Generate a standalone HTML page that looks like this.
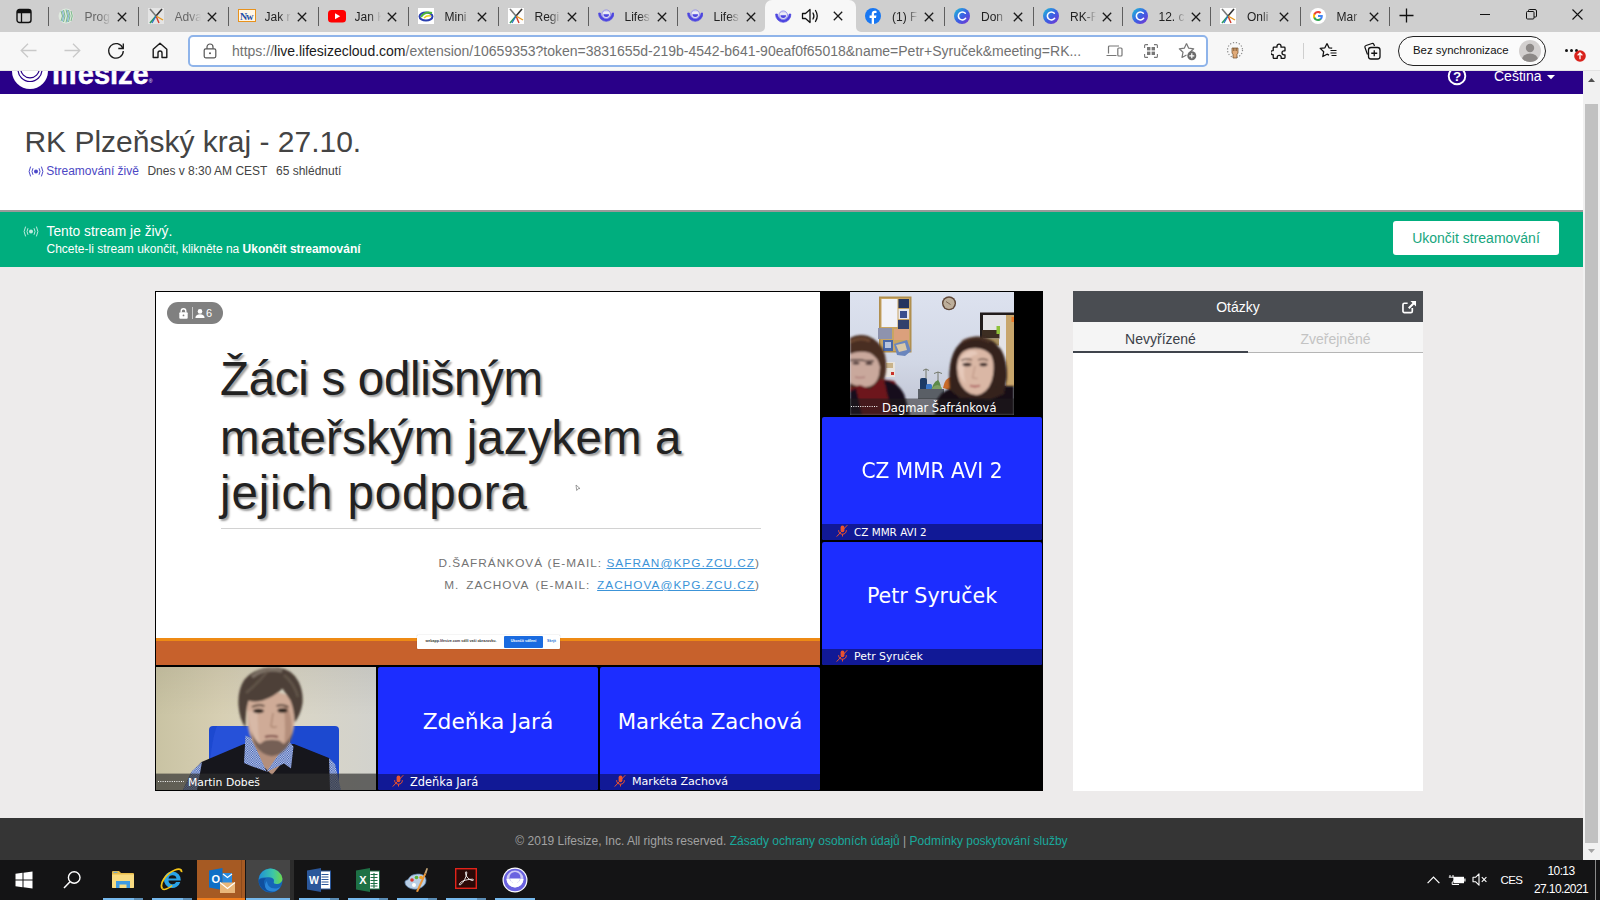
<!DOCTYPE html>
<html lang="cs">
<head>
<meta charset="utf-8">
<title>RK Plzeňský kraj - 27.10.</title>
<style>
*{box-sizing:border-box;margin:0;padding:0}
html,body{width:1600px;height:900px;overflow:hidden;background:#edebeb;font-family:"Liberation Sans",sans-serif;}
.abs{position:absolute}
svg{display:block}
#root{position:relative;width:1600px;height:900px;overflow:hidden}
/* ---------- browser chrome ---------- */
#tabbar{left:0;top:0;width:1600px;height:32px;background:#cfcfcf}
#toolbar{left:0;top:32px;width:1600px;height:39px;background:#f7f7f7;border-bottom:1px solid #e3e3e3}
.tab{top:0;height:32px;font-size:12px;color:#1b1b1b;white-space:nowrap}
.tab .sep{position:absolute;left:0;top:7px;width:1px;height:19px;background:#5f5f5f}
.tab .ic{position:absolute;left:10px;top:7.800px;width:18px;height:18px}
.tab .tx{position:absolute;left:37px;top:8.600px;width:26px;height:16px;overflow:hidden;line-height:16px;font-size:12px;
  -webkit-mask-image:linear-gradient(90deg,#000 55%,transparent 100%);mask-image:linear-gradient(90deg,#000 55%,transparent 100%)}
.tab .x{position:absolute;left:69px;top:11.600px;width:10px;height:10px}
#acttab{left:765px;top:0;width:90.500px;height:32px;background:#f7f7f7;border-radius:7px 7px 0 0}
#addr{left:187.500px;top:35px;width:1020px;height:31.500px;background:#fff;border:2px solid #8fb4ea;border-radius:5px}
#url{left:232px;top:43.100px;font-size:14px;line-height:16px;color:#717171;white-space:nowrap;letter-spacing:0px}
#url b{font-weight:400;color:#1a1a1a}
/* ---------- page ---------- */
#purple{left:0;top:71px;width:1583px;height:23px;background:#290088;overflow:hidden}
#white{left:0;top:94px;width:1583px;height:116px;background:#fff}
#h1{left:24.400px;top:124.400px;font-size:30px;line-height:36px;color:#444;white-space:nowrap}
#sub{left:46.200px;top:164.400px;font-size:12px;line-height:15px;color:#444;white-space:nowrap}
#sub .live{color:#4c47c4}
#greyline{left:0;top:210px;width:1583px;height:2px;background:#9a9a9a}
#green{left:0;top:212px;width:1583px;height:55px;background:#00ae7e}
#g1{left:46.500px;top:222.500px;font-size:13.800px;line-height:18px;color:#fff;white-space:nowrap}
#g2{left:46.500px;top:242px;font-size:12px;line-height:15px;color:#fff;white-space:nowrap}
#endbtn{left:1393px;top:221px;width:166px;height:34px;background:#fff;border-radius:3px;color:#16a67e;font-size:14px;line-height:35px;text-align:center}
#scroll{left:1583px;top:71px;width:17px;height:789px;background:#f1f1f1}
#thumb{left:1585px;top:104px;width:13px;height:738.600px;background:#c1c1c1}
#logo{left:52px;top:-17.200px;font-size:29px;line-height:40px;font-weight:bold;color:#fff;letter-spacing:0;white-space:nowrap;-webkit-text-stroke:.5px #fff}
#lang{left:1494px;top:-3.200px;font-size:14px;line-height:16px;color:#fff;white-space:nowrap}
#ftx{left:0;top:16px;width:1583px;text-align:center;white-space:nowrap}
#ftx .lk{color:#19a99c}
.ttx{font-size:12px;line-height:15px;color:#fff;white-space:nowrap}
/* ---------- video ---------- */
#video{left:155px;top:291px;width:888px;height:500px;background:#000;overflow:hidden}
#slide{left:1px;top:1px;width:664px;height:373px;background:#fff;overflow:hidden}
.tile{background:#1c2dff;overflow:hidden;border-radius:2px;font-family:"DejaVu Sans","Liberation Sans",sans-serif}
.tile .big{position:absolute;left:0;right:0;text-align:center;color:#fff;white-space:nowrap}
.tile .bar{position:absolute;left:0;right:0;bottom:0;height:16px;background:#111996}
.tile .nm{position:absolute;left:32px;bottom:0;height:16px;line-height:16px;font-size:10.5px;color:#fff;white-space:nowrap}
#badge{left:11px;top:10px;width:56px;height:22px;border-radius:11px;background:#808080}
.ttl{left:64px;font-size:47.5px;line-height:56px;color:#222;white-space:nowrap;text-shadow:2px 2px 2px rgba(0,0,0,.38);letter-spacing:-.3px}
.stl{right:60px;font-size:11.8px;line-height:15px;color:#737373;letter-spacing:1.02px;white-space:nowrap}
.stl u{color:#3c94d8}
#pop{left:260.500px;top:342.700px;width:143.500px;height:14.500px;background:#fff;border-radius:1px;box-shadow:0 0 1px rgba(0,0,0,.4)}
.tile .big{font-size:21px;line-height:30px}
#dagmar{left:667px;top:1px;width:220px;height:123px;background:#000;overflow:hidden}
#martin{left:1px;top:376px;width:220px;height:123px;background:#b9bcb4;overflow:hidden}
.tile .mic{position:absolute;left:14px;bottom:3px}
.pnm{font-family:"DejaVu Sans","Liberation Sans",sans-serif;font-size:10.5px;line-height:13px;color:#fff;white-space:nowrap}
/* ---------- questions ---------- */
#qpanel{left:1073px;top:291px;width:350px;height:500px;background:#fff}
#qhead{left:0;top:0;width:350px;height:31px;background:#4a4d52;color:#fff;font-size:14px;line-height:33px;text-align:center}
#qtabs{left:0;top:31px;width:350px;height:31px;background:#f5f5f5;border-bottom:1px solid #b5b5b5}
/* ---------- footer / taskbar ---------- */
#footer{left:0;top:818px;width:1583px;height:42px;background:#353535;color:#a2a2a2;font-size:12px;line-height:15px}
#taskbar{left:0;top:860px;width:1600px;height:40px;background:#141415}
</style>
</head>
<body>
<div id="root">

<!-- TABBAR -->
<div id="tabbar" class="abs"></div>
<div id="acttab" class="abs"></div>
<svg class="abs" style="left:760px;top:27px" width="5" height="5" viewBox="0 0 7 7"><path d="M7 0v7H0A7 7 0 0 0 7 0z" fill="#f7f7f7"/></svg>
<svg class="abs" style="left:855.500px;top:27px" width="5" height="5" viewBox="0 0 7 7"><path d="M0 0v7h7A7 7 0 0 1 0 0z" fill="#f7f7f7"/></svg>
<div id="toolbar" class="abs"></div>
<div id="addr" class="abs"></div>
<div id="url" class="abs">https://<b>live.lifesizecloud.com</b>/extension/10659353?token=3831655d-219b-4542-b641-90eaf0f65018&amp;name=Petr+Syruček&amp;meeting=RK...</div>

<div class="abs tab" style="left:47.5px;width:89px"><span class="sep"></span><span class="ic"><svg viewBox="0 0 16 16" width="16" height="16"><circle cx="8" cy="8" r="7.500" fill="#dfe9df"/><path d="M3 3q3 5 0 10M5.500 2q3 6 0 12M8 1.500q3 6.500 0 13M10.500 2q3 6 0 12M13 3q2.500 5 0 10" fill="none" stroke="#7bb98a" stroke-width="1"/><path d="M4.200 2.500q3 5.500 0 11M9.200 1.800q3 6 0 12.400" fill="none" stroke="#6fa3d8" stroke-width=".8"/></svg></span><span class="tx" style="color:#666">Prog</span><svg class="x" viewBox="0 0 10 10"><path d="M.8.800l8.400 8.400M9.200.8L.8 9.200" stroke="#1a1a1a" stroke-width="1.300" fill="none"/></svg></div>
<div class="abs tab" style="left:137.5px;width:89px"><span class="sep"></span><span class="ic"><svg viewBox="0 0 16 16" width="16" height="16"><rect width="16" height="16" fill="#e4e4e4"/><path d="M2 1l6 7" stroke="#7a7a7a" stroke-width="1.600"/><path d="M14 1L8 8" stroke="#333" stroke-width="1.600"/><path d="M8 8l-6 7" stroke="#2c9c5a" stroke-width="1.600"/><path d="M8 8l3 7" stroke="#d23a2a" stroke-width="1.400"/><path d="M8 8l7 4" stroke="#e89a1c" stroke-width="1.400"/><path d="M8 8l-4 7" stroke="#2a6fc8" stroke-width="1.200"/></svg></span><span class="tx" style="color:#666">Adva</span><svg class="x" viewBox="0 0 10 10"><path d="M.8.800l8.400 8.400M9.200.8L.8 9.200" stroke="#1a1a1a" stroke-width="1.300" fill="none"/></svg></div>
<div class="abs tab" style="left:227.5px;width:89px"><span class="sep"></span><span class="ic"><svg viewBox="0 0 18 16" width="18" height="16"><rect x=".5" y="1.500" width="17" height="12" fill="#fff6e6" stroke="#e8921c" stroke-width="1"/><text x="2" y="11.500" font-family="Liberation Serif,serif" font-weight="bold" font-size="10" fill="#1f4fa8" letter-spacing="-1">Nw</text></svg></span><span class="tx" style="color:#222">Jak r</span><svg class="x" viewBox="0 0 10 10"><path d="M.8.800l8.400 8.400M9.200.8L.8 9.200" stroke="#1a1a1a" stroke-width="1.300" fill="none"/></svg></div>
<div class="abs tab" style="left:317.5px;width:89px"><span class="sep"></span><span class="ic"><svg viewBox="0 0 18 16" width="18" height="16"><rect x="0" y="2" width="18" height="12.500" rx="3.500" fill="#f00"/><path d="M7 5.200v6l5.200-3z" fill="#fff"/></svg></span><span class="tx" style="color:#222">Jan K</span><svg class="x" viewBox="0 0 10 10"><path d="M.8.800l8.400 8.400M9.200.8L.8 9.200" stroke="#1a1a1a" stroke-width="1.300" fill="none"/></svg></div>
<div class="abs tab" style="left:407.5px;width:89px"><span class="sep"></span><span class="ic"><svg viewBox="0 0 16 16" width="16" height="16"><rect width="16" height="16" fill="#fff"/><ellipse cx="8" cy="8.500" rx="6.500" ry="4" fill="none" stroke="#2a3fb0" stroke-width="2"/><path d="M3 9q4-6 11-4" fill="none" stroke="#4fb83a" stroke-width="2"/><path d="M6 10q3-3 7-2" fill="none" stroke="#e8d21c" stroke-width="1.500"/></svg></span><span class="tx" style="color:#222">Mini</span><svg class="x" viewBox="0 0 10 10"><path d="M.8.800l8.400 8.400M9.200.8L.8 9.200" stroke="#1a1a1a" stroke-width="1.300" fill="none"/></svg></div>
<div class="abs tab" style="left:497.5px;width:89px"><span class="sep"></span><span class="ic"><svg viewBox="0 0 16 16" width="16" height="16"><rect width="16" height="16" fill="#fdfdfd"/><path d="M2 1l6 7" stroke="#7a7a7a" stroke-width="1.600"/><path d="M14 1L8 8" stroke="#333" stroke-width="1.600"/><path d="M8 8l-6 7" stroke="#2c9c5a" stroke-width="1.600"/><path d="M8 8l3 7" stroke="#d23a2a" stroke-width="1.400"/><path d="M8 8l7 4" stroke="#e89a1c" stroke-width="1.400"/><path d="M8 8l-4 7" stroke="#2a6fc8" stroke-width="1.200"/></svg></span><span class="tx" style="color:#222">Regi</span><svg class="x" viewBox="0 0 10 10"><path d="M.8.800l8.400 8.400M9.200.8L.8 9.200" stroke="#1a1a1a" stroke-width="1.300" fill="none"/></svg></div>
<div class="abs tab" style="left:587.5px;width:89px"><span class="sep"></span><span class="ic"><svg viewBox="0 0 18 16" width="16.500" height="14.670" style="margin-top:.5px"><path d="M.73 5.500A8.300 8.300 0 1 0 17.270 5.500L15.480 5.500A6.500 6.500 0 0 1 2.520 5.500z" fill="#4d46e0" stroke="#4d46e0" stroke-width=".8" stroke-linejoin="round"/><circle cx="9" cy="6.800" r="4.700" fill="#dcdbf0" stroke="#8d88ea" stroke-width=".9"/><path d="M5.800 4.900h6.400M5.200 6.200h7.600" stroke="#f4f4fb" stroke-width=".8"/><path d="M6 6.900h6a3 3 0 0 1-6 0z" fill="#4d46e0"/></svg></span><span class="tx" style="color:#222">Lifes</span><svg class="x" viewBox="0 0 10 10"><path d="M.8.800l8.400 8.400M9.200.8L.8 9.200" stroke="#1a1a1a" stroke-width="1.300" fill="none"/></svg></div>
<div class="abs tab" style="left:676.5px;width:89px"><span class="sep"></span><span class="ic"><svg viewBox="0 0 18 16" width="16.500" height="14.670" style="margin-top:.5px"><path d="M.73 5.500A8.300 8.300 0 1 0 17.270 5.500L15.480 5.500A6.500 6.500 0 0 1 2.520 5.500z" fill="#4d46e0" stroke="#4d46e0" stroke-width=".8" stroke-linejoin="round"/><circle cx="9" cy="6.800" r="4.700" fill="#dcdbf0" stroke="#8d88ea" stroke-width=".9"/><path d="M5.800 4.900h6.400M5.200 6.200h7.600" stroke="#f4f4fb" stroke-width=".8"/><path d="M6 6.900h6a3 3 0 0 1-6 0z" fill="#4d46e0"/></svg></span><span class="tx" style="color:#222">Lifes</span><svg class="x" viewBox="0 0 10 10"><path d="M.8.800l8.400 8.400M9.200.8L.8 9.200" stroke="#1a1a1a" stroke-width="1.300" fill="none"/></svg></div>
<div class="abs tab" style="left:855px;width:89px"><span class="ic"><svg viewBox="0 0 16 16" width="16" height="16"><circle cx="8" cy="8" r="8" fill="#1877f2"/><path d="M9 16V10h2l.4-2.400H9V6.200c0-.8.300-1.200 1.200-1.200h1.300V2.900C11.200 2.800 10.500 2.700 9.700 2.700 7.900 2.700 6.700 3.800 6.700 5.900v1.700H4.600V10h2.100v6z" fill="#fff"/></svg></span><span class="tx" style="color:#222">(1) F</span><svg class="x" viewBox="0 0 10 10"><path d="M.8.800l8.400 8.400M9.200.8L.8 9.200" stroke="#1a1a1a" stroke-width="1.300" fill="none"/></svg></div>
<div class="abs tab" style="left:944px;width:89px"><span class="sep"></span><span class="ic"><svg viewBox="0 0 16 16" width="16" height="16"><defs><linearGradient id="cg" x1="0" y1="0" x2="1" y2="1"><stop offset="0" stop-color="#1cc4d6"/><stop offset=".5" stop-color="#3a62e4"/><stop offset="1" stop-color="#7a2fd0"/></linearGradient></defs><circle cx="8" cy="8" r="8" fill="url(#cg)"/><path d="M11.300 5.200A4 4 0 1 0 11.600 10.300" fill="none" stroke="#fff" stroke-width="1.600" stroke-linecap="round"/></svg></span><span class="tx" style="color:#222">Don</span><svg class="x" viewBox="0 0 10 10"><path d="M.8.800l8.400 8.400M9.200.8L.8 9.200" stroke="#1a1a1a" stroke-width="1.300" fill="none"/></svg></div>
<div class="abs tab" style="left:1033px;width:89px"><span class="sep"></span><span class="ic"><svg viewBox="0 0 16 16" width="16" height="16"><defs><linearGradient id="cg" x1="0" y1="0" x2="1" y2="1"><stop offset="0" stop-color="#1cc4d6"/><stop offset=".5" stop-color="#3a62e4"/><stop offset="1" stop-color="#7a2fd0"/></linearGradient></defs><circle cx="8" cy="8" r="8" fill="url(#cg)"/><path d="M11.300 5.200A4 4 0 1 0 11.600 10.300" fill="none" stroke="#fff" stroke-width="1.600" stroke-linecap="round"/></svg></span><span class="tx" style="color:#222">RK-F</span><svg class="x" viewBox="0 0 10 10"><path d="M.8.800l8.400 8.400M9.200.8L.8 9.200" stroke="#1a1a1a" stroke-width="1.300" fill="none"/></svg></div>
<div class="abs tab" style="left:1121.5px;width:89px"><span class="sep"></span><span class="ic"><svg viewBox="0 0 16 16" width="16" height="16"><defs><linearGradient id="cg" x1="0" y1="0" x2="1" y2="1"><stop offset="0" stop-color="#1cc4d6"/><stop offset=".5" stop-color="#3a62e4"/><stop offset="1" stop-color="#7a2fd0"/></linearGradient></defs><circle cx="8" cy="8" r="8" fill="url(#cg)"/><path d="M11.300 5.200A4 4 0 1 0 11.600 10.300" fill="none" stroke="#fff" stroke-width="1.600" stroke-linecap="round"/></svg></span><span class="tx" style="color:#222">12. c</span><svg class="x" viewBox="0 0 10 10"><path d="M.8.800l8.400 8.400M9.200.8L.8 9.200" stroke="#1a1a1a" stroke-width="1.300" fill="none"/></svg></div>
<div class="abs tab" style="left:1210px;width:89px"><span class="sep"></span><span class="ic"><svg viewBox="0 0 16 16" width="16" height="16"><rect width="16" height="16" fill="#fdfdfd"/><path d="M2 1l6 7" stroke="#7a7a7a" stroke-width="1.600"/><path d="M14 1L8 8" stroke="#333" stroke-width="1.600"/><path d="M8 8l-6 7" stroke="#2c9c5a" stroke-width="1.600"/><path d="M8 8l3 7" stroke="#d23a2a" stroke-width="1.400"/><path d="M8 8l7 4" stroke="#e89a1c" stroke-width="1.400"/><path d="M8 8l-4 7" stroke="#2a6fc8" stroke-width="1.200"/></svg></span><span class="tx" style="color:#222">Onli</span><svg class="x" viewBox="0 0 10 10"><path d="M.8.800l8.400 8.400M9.200.8L.8 9.200" stroke="#1a1a1a" stroke-width="1.300" fill="none"/></svg></div>
<div class="abs tab" style="left:1299.5px;width:89px"><span class="sep"></span><span class="ic"><svg viewBox="0 0 16 16" width="16" height="16"><circle cx="8" cy="8" r="8" fill="#fff"/><path d="M12.800 8.100c0-.4 0-.7-.1-1H8v1.900h2.700c-.1.600-.5 1.200-1 1.500v1.300h1.600c1-.9 1.500-2.200 1.500-3.700z" fill="#4285f4"/><path d="M8 13c1.400 0 2.500-.4 3.300-1.200l-1.600-1.300c-.4.300-1 .5-1.700.5-1.300 0-2.400-.9-2.800-2.100H3.500v1.300C4.300 11.900 6 13 8 13z" fill="#34a853"/><path d="M5.200 8.900c-.1-.3-.2-.6-.2-.9s.1-.6.200-.9V5.800H3.500C3.200 6.500 3 7.200 3 8s.2 1.500.5 2.200z" fill="#fbbc05"/><path d="M8 5c.7 0 1.400.3 1.900.7l1.400-1.400C10.500 3.500 9.400 3 8 3 6 3 4.300 4.100 3.500 5.800l1.700 1.300C5.600 5.900 6.700 5 8 5z" fill="#ea4335"/></svg></span><span class="tx" style="color:#222">Mar</span><svg class="x" viewBox="0 0 10 10"><path d="M.8.800l8.400 8.400M9.200.8L.8 9.200" stroke="#1a1a1a" stroke-width="1.300" fill="none"/></svg></div>
<div class="abs" style="left:1388.500px;top:7px;width:1px;height:19px;background:#5f5f5f"></div>
<svg class="abs" style="left:16px;top:8px" width="16" height="16" viewBox="0 0 16 16"><rect x="1" y="1.500" width="14" height="13" rx="2.500" fill="none" stroke="#111" stroke-width="1.400"/><path d="M1 3.500a2 2 0 0 1 2-2h10a2 2 0 0 1 2 2v1.700H1z" fill="#111"/><path d="M5.500 5v9.500" stroke="#111" stroke-width="1.300"/></svg>
<div class="abs" style="left:775px;top:8px;width:18px;height:16px"><svg viewBox="0 0 18 16" width="16.500" height="14.670" style="margin-top:.5px"><path d="M.73 5.500A8.300 8.300 0 1 0 17.270 5.500L15.480 5.500A6.500 6.500 0 0 1 2.520 5.500z" fill="#4d46e0" stroke="#4d46e0" stroke-width=".8" stroke-linejoin="round"/><circle cx="9" cy="6.800" r="4.700" fill="#dcdbf0" stroke="#8d88ea" stroke-width=".9"/><path d="M5.800 4.900h6.400M5.200 6.200h7.600" stroke="#f4f4fb" stroke-width=".8"/><path d="M6 6.900h6a3 3 0 0 1-6 0z" fill="#4d46e0"/></svg></div>
<svg class="abs" style="left:801px;top:7px" width="20" height="18" viewBox="0 0 20 18"><path d="M1.500 6.500h3l4.500-4v13l-4.500-4h-3z" fill="none" stroke="#111" stroke-width="1.300" stroke-linejoin="round"/><path d="M12 6q1.800 3 0 6M14.500 3.500q3.500 5.500 0 11" fill="none" stroke="#111" stroke-width="1.300" stroke-linecap="round"/></svg>
<svg class="abs" style="left:833px;top:11px" width="10" height="10" viewBox="0 0 10 10"><path d="M.8.800l8.400 8.400M9.200.8L.8 9.200" stroke="#1a1a1a" stroke-width="1.300" fill="none"/></svg>
<svg class="abs" style="left:1399px;top:8px" width="15" height="15" viewBox="0 0 15 15"><path d="M7.500 .5v14M.5 7.500h14" stroke="#111" stroke-width="1.300"/></svg>
<div class="abs" style="left:1480px;top:14px;width:10px;height:1px;background:#111"></div>
<svg class="abs" style="left:1526px;top:9px" width="11" height="11" viewBox="0 0 11 11"><rect x=".5" y="2.500" width="7.500" height="7.500" rx="1" fill="none" stroke="#111" stroke-width="1"/><path d="M2.500 2.500V1.500a1 1 0 0 1 1-1H9a1.500 1.500 0 0 1 1.500 1.500V7a1 1 0 0 1-1 1H8" fill="none" stroke="#111" stroke-width="1"/></svg>
<svg class="abs" style="left:1572px;top:9px" width="11" height="11" viewBox="0 0 11 11"><path d="M.5.500l10 10M10.500.500l-10 10" stroke="#111" stroke-width="1.100"/></svg>
<svg class="abs" style="left:20px;top:43px" width="17" height="15" viewBox="0 0 17 15"><path d="M8 .8L1.200 7.500 8 14.200M1.200 7.500H16.500" fill="none" stroke="#c9c9c9" stroke-width="1.300"/></svg>
<svg class="abs" style="left:64px;top:43px" width="17" height="15" viewBox="0 0 17 15"><path d="M9 .8l6.800 6.700L9 14.200M15.800 7.500H.5" fill="none" stroke="#c9c9c9" stroke-width="1.300"/></svg>
<svg class="abs" style="left:107px;top:42px" width="18" height="18" viewBox="0 0 18 18"><path d="M15.800 6.200A7.300 7.300 0 1 0 16.300 9" fill="none" stroke="#1a1a1a" stroke-width="1.300"/><path d="M16.300 1.500v5h-5" fill="none" stroke="#1a1a1a" stroke-width="1.300"/></svg>
<svg class="abs" style="left:152px;top:42px" width="16" height="17" viewBox="0 0 16 17"><path d="M1.200 7.200L8 1.200l6.800 6V15.500H10V11a2 2 0 0 0-4 0v4.500H1.200z" fill="none" stroke="#1a1a1a" stroke-width="1.400" stroke-linejoin="round"/></svg>
<svg class="abs" style="left:203px;top:43px" width="14" height="16" viewBox="0 0 14 16"><rect x="1.200" y="5.800" width="11.600" height="9" rx="1.500" fill="none" stroke="#555" stroke-width="1.200"/><path d="M4 5.800V4a3 3 0 0 1 6 0v1.800" fill="none" stroke="#555" stroke-width="1.200"/><circle cx="7" cy="10.300" r="1" fill="#555"/></svg>
<svg class="abs" style="left:1106px;top:45px" width="17" height="12" viewBox="0 0 17 12"><path d="M2.500 8.500V2a1 1 0 0 1 1-1h9.500M.5 10.500h10" fill="none" stroke="#777" stroke-width="1.200"/><rect x="11.800" y="3" width="4.200" height="8" rx="1" fill="none" stroke="#777" stroke-width="1.200"/></svg>
<svg class="abs" style="left:1144px;top:44px" width="14" height="14" viewBox="0 0 14 14"><path d="M.6 4V1.600a1 1 0 0 1 1-1H4M10 .6h2.400a1 1 0 0 1 1 1V4M13.400 10v2.400a1 1 0 0 1-1 1H10M4 13.400H1.600a1 1 0 0 1-1-1V10" fill="none" stroke="#777" stroke-width="1.100"/><rect x="3" y="3" width="3.400" height="3.400" fill="#777"/><rect x="7.600" y="3" width="3.400" height="3.400" fill="#777"/><rect x="3" y="7.600" width="3.400" height="3.400" fill="#777"/><rect x="7.600" y="7.600" width="3.400" height="3.400" fill="#777"/></svg>
<svg class="abs" style="left:1178px;top:42px" width="19" height="19" viewBox="0 0 19 19"><path d="M8.500 1.500l2.200 4.700 5 .6-3.700 3.400.6 2.400M8.500 1.500L6.300 6.200l-5 .6 3.700 3.500-1 5.100 4.500-2.500" fill="none" stroke="#777" stroke-width="1.200" stroke-linejoin="round"/><circle cx="13.800" cy="13.800" r="4.500" fill="#6b6b6b"/><path d="M13.800 11.300v5M11.300 13.800h5" stroke="#fff" stroke-width="1.200"/></svg>
<svg class="abs" style="left:1226px;top:42px" width="18" height="18" viewBox="0 0 18 18"><circle cx="9" cy="8" r="7.500" fill="none" stroke="#8a8a8a" stroke-width="1.200" stroke-dasharray="1.200 1.800"/><path d="M6 6h6v5l-1 1.500V16H7v-3.500L6 11z" fill="#e0aa78" stroke="#6a4a2a" stroke-width=".7"/><path d="M7.500 6v3M9 6v3M10.500 6v3" stroke="#6a4a2a" stroke-width=".6"/></svg>
<svg class="abs" style="left:1271px;top:43px" width="17" height="17" viewBox="0 0 17 17"><path d="M6 3.200a2 2 0 0 1 4 0V4.200h3.200a.8.800 0 0 1 .8.800v2.800h-1a2 2 0 0 0 0 4h1v2.800a.8.800 0 0 1-.8.800H10.200v-1a2 2 0 0 0-4 0v1H3a.8.800 0 0 1-.8-.8V11.600h-.5a2 2 0 0 1 0-4h.5V5a.8.800 0 0 1 .8-.8H6z" fill="none" stroke="#111" stroke-width="1.300" stroke-linejoin="round"/></svg>
<div class="abs" style="left:1303px;top:43px;width:1px;height:16px;background:#cfcfcf"></div>
<svg class="abs" style="left:1319px;top:42px" width="19" height="17" viewBox="0 0 19 17"><path d="M8 1.500l2 4.300 3.200.4M8 1.500L5.900 5.800l-4.700.6 3.500 3.300-.9 4.800L8 12.200l2 1" fill="none" stroke="#111" stroke-width="1.300" stroke-linejoin="round"/><path d="M11.500 8.500h6M11.500 11h6M12.500 13.500h5" stroke="#111" stroke-width="1.200"/></svg>
<svg class="abs" style="left:1363px;top:42px" width="19" height="18" viewBox="0 0 19 18"><path d="M4.500 12.500L2 5.500a1.500 1.500 0 0 1 1-2l6-2a1.500 1.500 0 0 1 1.800.8L11.500 4" fill="none" stroke="#111" stroke-width="1.200"/><rect x="5.500" y="5.500" width="11.500" height="11.500" rx="2.500" fill="#f7f7f7" stroke="#111" stroke-width="1.300"/><path d="M11.250 8.200v6M8.250 11.250h6" stroke="#111" stroke-width="1.300"/></svg>
<div class="abs" style="left:1398px;top:36px;width:148px;height:30px;border:1px solid #222;border-radius:15px;background:#fbfbfb"></div>
<div class="abs" style="left:1413px;top:43px;font-size:11.400px;line-height:15px;color:#111;white-space:nowrap" id="sync">Bez synchronizace</div>
<svg class="abs" style="left:1519px;top:40px" width="22" height="22" viewBox="0 0 22 22"><defs><clipPath id="avc"><circle cx="11" cy="11" r="11"/></clipPath></defs><circle cx="11" cy="11" r="11" fill="#d3d0cf"/><g clip-path="url(#avc)"><circle cx="11" cy="8" r="4.200" fill="#8d8987"/><ellipse cx="11" cy="19.500" rx="8" ry="6" fill="#8d8987"/></g></svg>
<div class="abs" style="left:1565px;top:49px;width:13px;height:3px"><span class="abs" style="left:0;top:0;width:2.500px;height:2.500px;border-radius:2px;background:#111"></span><span class="abs" style="left:5px;top:0;width:2.500px;height:2.500px;border-radius:2px;background:#111"></span><span class="abs" style="left:10px;top:0;width:2.500px;height:2.500px;border-radius:2px;background:#111"></span></div>
<svg class="abs" style="left:1574px;top:50px" width="12" height="12" viewBox="0 0 12 12"><circle cx="6" cy="6" r="5.800" fill="#d9221c"/><path d="M6 9.300V3.200M3.600 5.400L6 3l2.400 2.400" fill="none" stroke="#fff" stroke-width="1.300"/></svg>
<!-- PAGE -->
<div id="purple" class="abs"><svg class="abs" style="left:12px;top:-18px" width="36" height="36" viewBox="0 0 36 36"><circle cx="18" cy="18" r="18" fill="#fff"/><circle cx="18" cy="16.500" r="12" fill="none" stroke="#290088" stroke-width="1.200"/><circle cx="18" cy="15.500" r="9.300" fill="none" stroke="#290088" stroke-width="1.200"/></svg>
<div class="abs" id="logo">lifesize<span style="font-size:5px;position:relative;top:-1px;left:0;-webkit-text-stroke:0;font-weight:normal">®</span></div>
<svg class="abs" style="left:1447px;top:-5px" width="20" height="20" viewBox="0 0 20 20"><circle cx="10" cy="10" r="8.300" fill="none" stroke="#fff" stroke-width="1.900"/><text x="10" y="14.800" text-anchor="middle" font-family="Liberation Sans,sans-serif" font-weight="bold" font-size="13.500" fill="#fff">?</text></svg>
<div class="abs" id="lang">Čeština</div>
<svg class="abs" style="left:1547px;top:4px" width="8" height="5" viewBox="0 0 8 5"><path d="M0 0h8L4 4.300z" fill="#fff"/></svg>
</div>
<div id="white" class="abs"></div>
<div id="h1" class="abs">RK Plzeňský kraj - 27.10.</div>
<div id="sub" class="abs"><span class="live">Streamování živě</span><span style="margin-left:8.500px">Dnes v 8:30 AM CEST</span><span style="margin-left:8.500px">65 shlédnutí</span></div>
<div id="greyline" class="abs"></div>
<div id="green" class="abs"></div>
<div class="abs" style="left:27.5px;top:166px;width:16px;height:11px"><svg width="16" height="11" viewBox="0 0 16 11" opacity="1"><circle cx="8" cy="5.500" r="2" fill="#4b48c8"/><path d="M5 2.200q-2 3.300 0 6.600M11 2.200q2 3.300 0 6.600M2.600 .6q-3 4.900 0 9.800M13.400 .6q3 4.900 0 9.800" fill="none" stroke="#4b48c8" stroke-width="1"/></svg></div>
<div class="abs" style="left:23px;top:226px;width:16px;height:11px"><svg width="16" height="11" viewBox="0 0 16 11" opacity="0.75"><circle cx="8" cy="5.500" r="2" fill="#fff"/><path d="M5 2.200q-2 3.300 0 6.600M11 2.200q2 3.300 0 6.600M2.600 .6q-3 4.900 0 9.800M13.400 .6q3 4.900 0 9.800" fill="none" stroke="#fff" stroke-width="1"/></svg></div>
<div id="g1" class="abs">Tento stream je živý.</div>
<div id="g2" class="abs">Chcete-li stream ukončit, klikněte na <b>Ukončit streamování</b></div>
<div id="endbtn" class="abs">Ukončit streamování</div>
<div id="scroll" class="abs"></div>
<div id="thumb" class="abs"></div>
<svg class="abs" style="left:1588px;top:78px" width="7" height="4" viewBox="0 0 7 4"><path d="M0 4h7L3.500 0z" fill="#505050"/></svg>
<svg class="abs" style="left:1588px;top:849px" width="7" height="4" viewBox="0 0 7 4"><path d="M0 0h7L3.500 4z" fill="#a3a3a3"/></svg>

<!-- VIDEO -->
<div id="video" class="abs">
  <div id="slide" class="abs">
    <div id="badge" class="abs"><svg class="abs" style="left:12px;top:6px" width="9" height="11" viewBox="0 0 9 11"><path d="M2.2 4.5V3a2.3 2.3 0 0 1 4.6 0v1.5" fill="none" stroke="#fff" stroke-width="1.4"/><rect x="0.3" y="4.3" width="8.4" height="6.4" rx="1" fill="#fff"/><circle cx="4.5" cy="7.4" r="0.9" fill="#808080"/></svg><span class="abs" style="left:24.5px;top:5px;width:1px;height:12px;background:#c9c9c9"></span><svg class="abs" style="left:28px;top:7px" width="10" height="9" viewBox="0 0 10 9"><circle cx="5" cy="2.4" r="2.3" fill="#fff"/><path d="M0.4 9c0-2.6 2-3.8 4.6-3.8S9.600 6.400 9.600 9z" fill="#fff"/></svg><span class="abs" style="left:39px;top:4px;font-size:11px;line-height:14px;color:#fff">6</span></div>
    <div class="abs ttl" style="top:58.500px">Žáci s odlišným</div>
    <div class="abs ttl" style="top:117.700px;letter-spacing:.12px">mateřským jazykem a</div>
    <div class="abs ttl" style="top:173px;letter-spacing:.85px">jejich podpora</div>
    <div class="abs" style="left:65px;top:236px;width:540px;height:1px;background:#d2d2d2"></div>
    <div class="abs stl" style="top:264px">D.ŠAFRÁNKOVÁ (E-MAIL: <u>SAFRAN@KPG.ZCU.CZ</u>)</div>
    <div class="abs stl" style="top:286px;word-spacing:2.5px">M. ZACHOVA (E-MAIL: <u>ZACHOVA@KPG.ZCU.CZ</u>)</div>
    <svg class="abs" style="left:419px;top:192px" width="6" height="8" viewBox="0 0 6 8"><path d="M1 1l4 3.500-2 .3-1.300 1.700z" fill="#fff" stroke="#777" stroke-width=".7"/></svg>
    <div class="abs" style="left:0;top:345.500px;width:664px;height:28px;background:#c7612c;border-top:3px solid #ee8a14"></div>
    <div id="pop" class="abs"><span class="abs" style="left:9px;top:4.800px;font-size:3.6px;line-height:5px;color:#333;white-space:nowrap;font-weight:bold">webapp.lifesize.com sdílí vaši obrazovku.</span><span class="abs" style="left:87.500px;top:1.500px;width:39px;height:11.500px;background:#1a6be0;border-radius:1px;color:#fff;font-size:3.6px;line-height:11.500px;text-align:center;font-weight:bold">Ukončit sdílení</span><span class="abs" style="left:130.500px;top:4.800px;font-size:3.6px;line-height:5px;color:#2a6fd6;font-weight:bold">Skrýt</span></div>
  </div>
  <!-- right column -->
  <div class="abs" id="dagmar"><svg width="164" height="123" viewBox="28 0 164 123" class="abs" style="left:28px;top:0">
<defs><linearGradient id="dbg" x1="0" x2="0" y1="0" y2="1"><stop offset="0" stop-color="#dde2ef"/><stop offset=".55" stop-color="#d2d8e6"/><stop offset="1" stop-color="#bfc3d2"/></linearGradient>
<filter id="b3" x="-20%" y="-20%" width="140%" height="140%"><feGaussianBlur stdDeviation=".7"/></filter>
<filter id="b4" x="-20%" y="-20%" width="140%" height="140%"><feGaussianBlur stdDeviation="1.200"/></filter>
<pattern id="rdp" width="3" height="3" patternUnits="userSpaceOnUse"><rect width="3" height="3" fill="#a01c20"/><rect width="1.500" height="1.500" fill="#1d1012"/><rect x="1.500" y="1.500" width="1.500" height="1.500" fill="#2a1014"/></pattern></defs>
<rect x="28" width="164" height="123" fill="url(#dbg)"/>
<g filter="url(#b3)">
<rect x="57" y="4.500" width="32.500" height="56" fill="#b08f50"/><rect x="58.500" y="6" width="29.500" height="53" fill="#c8a562"/>
<rect x="59.500" y="7" width="16" height="28" fill="#f1f2f7"/><rect x="76.500" y="7" width="10.500" height="9" fill="#26355e"/><rect x="76.500" y="17" width="10.500" height="10" fill="#e8e8ee"/><rect x="78" y="19" width="7" height="7" fill="#3a4f8e"/><rect x="76" y="28" width="11" height="9" fill="#32406c"/>
<rect x="56" y="36" width="14" height="11" fill="#8e93ad"/><rect x="72" y="37" width="15" height="11" fill="#dba07c"/><rect x="61" y="48" width="10" height="11" fill="#4a67a8"/><rect x="63" y="50" width="6" height="6" fill="#b9c4dc"/>
<path d="M72 52l13-4 4 11-6 5-8-1z" fill="#6b86bd"/><path d="M74 53l9-2 2 7-8 2z" fill="#d9c9a8"/>
<circle cx="127" cy="11.300" r="7" fill="#5e4638"/><circle cx="127" cy="11.300" r="5.600" fill="#bdae9a"/><path d="M124 9.500l4.500 3" stroke="#5e4638" stroke-width=".7"/>
<path d="M158 20.500h34v74h-34z" fill="#241d1b"/><rect x="161" y="23" width="23.500" height="71" fill="#e4e3e6"/><rect x="184" y="23" width="8" height="72" fill="#c8a66c"/>
<rect x="160" y="38" width="17.500" height="8.500" fill="#3c2e24"/><rect x="161" y="46.500" width="16" height="7" fill="#a8905f"/><rect x="174.500" y="34" width="3.500" height="8" fill="#8fc13a"/><rect x="189.500" y="25" width="2.500" height="5" fill="#ea7a2c"/>
<rect x="63" y="70" width="10" height="15" fill="#e8e4de"/><rect x="64" y="71" width="7" height="5" fill="#c9b38a"/><rect x="69" y="80" width="3" height="3" fill="#c8302a"/>
<path d="M101 78.500l3-1.500 3 1.500M104 77v22M112 81.500l4-1.500 4 1.500M116 80v18" stroke="#6b6f60" stroke-width=".9" fill="none"/>
<rect x="98" y="86" width="7" height="18" rx="2" fill="#1f3a66"/><rect x="104" y="92" width="6" height="13" rx="1.500" fill="#3b78c8"/><path d="M108 104q2-14 8-16 4 4 2 12z" fill="#5c8a4a"/><path d="M110 96q6-6 10 0l-2 8h-7z" fill="#7da062"/>
<rect x="96" y="97" width="26" height="10" fill="#5a5e66"/>
<path d="M121 96q2-11 9-11 5 1 5 8l-4 6z" fill="#c96a2c"/>
</g>
<g filter="url(#b4)">
<path d="M28 123V46q8-5 18-2 13 5 17 19 3 14-1 25l-3 5 6 30z" fill="#4a2d22"/>
<path d="M28 50q10-6 20-1" stroke="#7a5238" stroke-width="3" fill="none" opacity=".7"/>
<path d="M28 62q10-4 20-1 8 4 10 14l-1 8q-3 12-14 12-8 0-15-4z" fill="#c9a89c"/>
<path d="M28 68.500q8-1.500 14 0l10 .5" stroke="#3a2a2a" stroke-width="1.500" fill="none"/><ellipse cx="34" cy="71" rx="3.500" ry="1.500" fill="#4a3534"/><ellipse cx="47" cy="71.500" rx="3.500" ry="1.500" fill="#4a3534"/>

<path d="M33 85q5 1.500 10 0" stroke="#a06868" stroke-width="1.200" fill="none"/>
<path d="M28 123V96l10-3 10 4 10-10 14 2 8 12 6 22z" fill="url(#rdp)"/>
<path d="M28 123V100l6-4 6 27zM62 88q14 2 20 14l6 21H70z" fill="#15101a"/>
<path d="M113 123q-1-20 14-26l20-3h45v29z" fill="#141118"/>
<path d="M128 98q-4-38 14-50 16-8 30 2 14 12 13 36l-3 16-14 6-30-2z" fill="#34211d"/>
<path d="M140 50q14-8 28 0" stroke="#5a3a2c" stroke-width="3" fill="none" opacity=".6"/>
<path d="M135 76q0-16 12-19 14-3 22 6 4 8 2 20-2 14-12 19-8 3-16-4-8-8-8-22z" fill="#dab7a5"/>
<path d="M136 74q2-12 12-15 6-1 8 3-10 2-13 10-3 10 1 20-7-6-8-18z" fill="#e8cdbf" opacity=".8"/>
<ellipse cx="145" cy="72.500" rx="4.500" ry="1.800" fill="#2e1f1c"/><ellipse cx="161.500" cy="72.500" rx="4" ry="1.800" fill="#2e1f1c"/><path d="M139 68.500q6-2.500 11-.5M156 68q5-2 10 .5" stroke="#4a322a" stroke-width="1.300" fill="none"/>
<path d="M153 74l-2.500 12 5 .5" stroke="#b8907e" stroke-width="1" fill="none"/>
<path d="M148 93.500q5 2 10 0" stroke="#a8585c" stroke-width="1.800" fill="none"/>
<path d="M168 60q8 14 4 36l10-4q5-22-4-36z" fill="#34211d"/>
</g>
<rect x="28" y="106.500" width="164" height="16.500" fill="#1d1b1b" opacity=".5"/>
<line x1="29" y1="114.500" x2="56" y2="114.500" stroke="#fff" stroke-width="1" stroke-dasharray="1 1.300"/>
</svg><span class="abs pnm" style="left:60px;top:109.500px;font-size:11.500px">Dagmar Šafránková</span></div>
  <div class="abs tile" style="left:667px;top:126px;width:220px;height:123px"><div class="big" style="top:39px;font-size:20.2px;transform:scaleY(1.05);transform-origin:50% 73.500%">CZ MMR AVI 2</div><div class="bar"></div><svg class="mic" width="12" height="12" viewBox="0 0 12 12"><rect x="4.6" y="0.6" width="3.8" height="6.600" rx="1.900" fill="#e8532f"/><path d="M2.600 5.200c0 2.600 1.700 4 3.900 4s3.900-1.400 3.900-4M6.500 9.200v2.300" fill="none" stroke="#e8532f" stroke-width="1"/><path d="M11.300.2L.7 11.600" stroke="#e8532f" stroke-width="1"/></svg><div class="nm" style="font-size:10.4px">CZ MMR AVI 2</div></div>
  <div class="abs tile" style="left:667px;top:251px;width:220px;height:123px"><div class="big" style="top:39px;font-size:20.6px">Petr Syruček</div><div class="bar"></div><svg class="mic" width="12" height="12" viewBox="0 0 12 12"><rect x="4.6" y="0.6" width="3.8" height="6.600" rx="1.900" fill="#e8532f"/><path d="M2.600 5.200c0 2.600 1.700 4 3.900 4s3.900-1.400 3.900-4M6.500 9.200v2.300" fill="none" stroke="#e8532f" stroke-width="1"/><path d="M11.300.2L.7 11.600" stroke="#e8532f" stroke-width="1"/></svg><div class="nm" style="font-size:10.9px">Petr Syruček</div></div>
  <!-- bottom row -->
  <div class="abs" id="martin"><svg width="220" height="123" viewBox="0 0 220 123" class="abs" style="left:0;top:0">
<defs><linearGradient id="mbg" x1="0" x2="1" y1="0" y2="0"><stop offset="0" stop-color="#c9c3a3"/><stop offset=".3" stop-color="#d7cfb3"/><stop offset=".62" stop-color="#dad6c6"/><stop offset="1" stop-color="#d2d2cd"/></linearGradient>
<linearGradient id="mbg2" x1="0" x2="0" y1="0" y2="1"><stop offset="0" stop-color="#000" stop-opacity=".06"/><stop offset=".4" stop-color="#000" stop-opacity="0"/></linearGradient>
<filter id="b1" x="-20%" y="-20%" width="140%" height="140%"><feGaussianBlur stdDeviation=".6"/></filter>
<filter id="b2" x="-20%" y="-20%" width="140%" height="140%"><feGaussianBlur stdDeviation="1"/></filter>
<pattern id="chk" width="2.400" height="2.400" patternUnits="userSpaceOnUse"><rect width="2.400" height="2.400" fill="#d3def5"/><rect width="1.200" height="1.200" fill="#2f4fa8"/><rect x="1.200" y="1.200" width="1.200" height="1.200" fill="#2f4fa8"/></pattern></defs>
<rect width="220" height="123" fill="url(#mbg)"/><rect width="220" height="123" fill="url(#mbg2)"/>
<g filter="url(#b1)">
<path d="M53 123V63q0-4 4-4h122q4 0 4 4v60z" fill="#1f49d0"/>
<path d="M53 110q2-36 8-51h34v64H53z" fill="#2c58e0" opacity=".55"/>
<path d="M27 123l8-17 10.500-11L88 77h50l35 14 6 8 5 24z" fill="#17141a"/>
<path d="M27 123l9-19 10-9-5 28zM173 91l6 6 6 26h-11z" fill="url(#chk)"/>
<path d="M96 70h38v16l-18 22-20-20z" fill="#b48f7c"/>
<path d="M89.500 68.500l6 3 15 33-15.500-5.500-7-3z" fill="url(#chk)"/>
<path d="M132 73.500l5.500 6-2.500 22-7-5-17.500 8.500z" fill="url(#chk)"/>
</g>
<g filter="url(#b2)">
<path d="M91 40q0-14 24-15 24 1 24 15l-1 20q-2 14-10 22-6 6-12.500 6t-12.500-6q-9-8-11-22z" fill="#cfab97"/>
<path d="M92 44q2 24 12 34-3-16-2-34z" fill="#dcbfae" opacity=".7"/>
<path d="M132 40q4 10 4 24-2 12-8 18 2-20 0-42z" fill="#a9836f" opacity=".7"/>
<path d="M95 64q2 16 12 22 5 3 9 3t9-3q10-7 12-22-4 10-9 13l-5-3.500q-7-1.500-14 0l-5 3.500q-6-4-9-13z" fill="#6a564c" opacity=".9"/>
<ellipse cx="102.500" cy="44" rx="5.500" ry="2.200" fill="#2b201c"/><ellipse cx="126.500" cy="43.500" rx="5" ry="2.200" fill="#2b201c"/>
<path d="M96 40q6-3 12.500-1M120.500 39q6-2 12 1" stroke="#4a382f" stroke-width="1.800" fill="none"/>
<path d="M117 46l-2 13q2 2.500 6 .5" stroke="#a9836f" stroke-width="1.300" fill="none"/>
<path d="M109 70q6.500-2 13 0" stroke="#7a4844" stroke-width="2" fill="none"/>
<path d="M89.500 60.500q-6-8-7-22-1-16 6-26 8-10 24-12h10q14 2 20 14 5 10 4 22-2 12-8 19 0-12-4-22-4-6-8-12-8 8-20 12-8 2-14 0-3 10-3 27z" fill="#4d4138"/>
<path d="M96 10q12-10 30-6" stroke="#8c8074" stroke-width="3.500" fill="none" opacity=".75"/>
<path d="M112 4q-10 12-22 22M128 8q10 8 14 22" stroke="#6b5e52" stroke-width="2.500" fill="none" opacity=".7"/>
</g>
<rect x="0" y="106.600" width="220" height="16.400" fill="#2e2e2e" opacity=".68"/>
<line x1="2" y1="114.500" x2="28" y2="114.500" stroke="#fff" stroke-width="1" stroke-dasharray="1 1.300"/>
</svg><span class="abs pnm" style="left:32px;top:108.800px;font-size:10.800px">Martin Dobeš</span></div>
  <div class="abs tile" style="left:223px;top:376px;width:220px;height:123px"><div class="big" style="top:39.600px;font-size:21.8px">Zdeňka Jará</div><div class="bar"></div><svg class="mic" width="12" height="12" viewBox="0 0 12 12"><rect x="4.6" y="0.6" width="3.8" height="6.600" rx="1.900" fill="#e8532f"/><path d="M2.600 5.200c0 2.600 1.700 4 3.900 4s3.900-1.400 3.900-4M6.500 9.200v2.300" fill="none" stroke="#e8532f" stroke-width="1"/><path d="M11.300.2L.7 11.600" stroke="#e8532f" stroke-width="1"/></svg><div class="nm" style="font-size:11.4px">Zdeňka Jará</div></div>
  <div class="abs tile" style="left:445px;top:376px;width:220px;height:123px"><div class="big" style="top:39.600px;font-size:21.3px">Markéta Zachová</div><div class="bar"></div><svg class="mic" width="12" height="12" viewBox="0 0 12 12"><rect x="4.6" y="0.6" width="3.8" height="6.600" rx="1.900" fill="#e8532f"/><path d="M2.600 5.200c0 2.600 1.700 4 3.900 4s3.900-1.400 3.900-4M6.500 9.200v2.300" fill="none" stroke="#e8532f" stroke-width="1"/><path d="M11.300.2L.7 11.600" stroke="#e8532f" stroke-width="1"/></svg><div class="nm" style="font-size:11.1px">Markéta Zachová</div></div>
</div>

<!-- QUESTIONS -->
<div id="qpanel" class="abs">
  <div id="qhead" class="abs"><span class="abs" style="left:0;width:330px;text-align:center">Otázky</span><svg class="abs" style="left:329px;top:9px" width="15" height="14" viewBox="0 0 16 15"><path d="M11 8.500V12a1.500 1.500 0 0 1-1.500 1.500h-7A1.500 1.500 0 0 1 1 12V5a1.500 1.500 0 0 1 1.500-1.500H6" fill="none" stroke="#fff" stroke-width="1.800"/><path d="M9 1h6v6l-2.200-2.200L8 9.600 6.400 8l4.800-4.800z" fill="#fff"/></svg></div>
  <div id="qtabs" class="abs"><span class="abs" style="left:0;top:0;width:175px;height:31px;line-height:34px;text-align:center;color:#3b4048;font-size:14px;border-bottom:2px solid #3f444c">Nevyřízené</span><span class="abs" style="left:175px;top:0;width:175px;height:31px;line-height:34px;text-align:center;color:#c3c3c3;font-size:14px">Zveřejněné</span></div>
</div>

<!-- FOOTER -->
<div id="footer" class="abs"><div class="abs" id="ftx">© 2019 Lifesize, Inc. All rights reserved. <span class="lk">Zásady ochrany osobních údajů</span> | <span class="lk">Podmínky poskytování služby</span></div></div>
<div id="taskbar" class="abs">
<svg class="abs" style="left:15px;top:11px" width="18" height="18" viewBox="0 0 18 18"><path d="M.5 2.800L7.500 1.800V8.500H.5zM8.500 1.650L17.500.400V8.500H8.500zM.5 9.500H7.500V16.200L.5 15.200zM8.500 9.500H17.500V17.600L8.500 16.350z" fill="#fff"/></svg>
<svg class="abs" style="left:63px;top:10px" width="19" height="19" viewBox="0 0 19 19"><circle cx="11.200" cy="7.500" r="5.800" fill="none" stroke="#fff" stroke-width="1.400"/><path d="M7 11.800L1 18" stroke="#fff" stroke-width="1.500"/></svg>
<svg class="abs" style="left:112px;top:10px" width="22" height="19" viewBox="0 0 22 19"><path d="M0 2a1 1 0 0 1 1-1h6l2 2h12a1 1 0 0 1 1 1v13a1 1 0 0 1-1 1H1a1 1 0 0 1-1-1z" fill="#e9bd4a"/><path d="M0 4.500h22V17a1 1 0 0 1-1 1H1a1 1 0 0 1-1-1z" fill="#f9dc82"/><rect x="1.500" y="1.800" width="4" height="1" fill="#5aa7e0"/><path d="M4 11h14v7h-3.500v-3.500h-7V18H4z" fill="#3f9be3"/></svg>
<span class="abs" style="left:103px;top:38px;width:31px;height:2px;background:#76b9ed"></span><span class="abs" style="left:134px;top:38px;width:9px;height:2px;background:#5b8db5"></span>
<svg class="abs" style="left:160px;top:7px" width="24" height="24" viewBox="0 0 24 24"><path d="M12.500 4.500a8.300 8.300 0 0 1 8.300 9H8.500a4 4 0 0 0 7.600 1.500h4.200A8.300 8.300 0 1 1 12.500 4.500zm0 3.700a4 4 0 0 0-4 3.200h8a4 4 0 0 0-4-3.200z" fill="#2aa3e6"/><path d="M2.200 21.500C-.5 17 5 7 15 3c4-1.600 7-.8 6.500 2.200" fill="none" stroke="#f5c518" stroke-width="1.800"/><path d="M2.200 21.500c1.500 2 6 .5 10-3" fill="none" stroke="#f5c518" stroke-width="1.500"/></svg>
<span class="abs" style="left:152px;top:38px;width:31px;height:2px;background:#76b9ed"></span><span class="abs" style="left:183px;top:38px;width:9px;height:2px;background:#5b8db5"></span>
<span class="abs" style="left:197px;top:0;width:48px;height:40px;background:#a65a23"></span><span class="abs" style="left:197px;top:38px;width:48px;height:2px;background:#f07d1c"></span><span class="abs" style="left:241px;top:0;width:1px;height:38px;background:#8c4a1c"></span>
<svg class="abs" style="left:209px;top:7px" width="27" height="27" viewBox="0 0 27 27"><path d="M0 3.500L13.500 1v22L0 20.500z" fill="#0f6fc6"/><rect x="13.500" y="6" width="9.500" height="10" fill="#2a8be0"/><path d="M14 7l4.500 3.500L23 7" fill="none" stroke="#fff" stroke-width="1.200"/><text x="6.700" y="16" text-anchor="middle" font-family="Liberation Sans,sans-serif" font-weight="bold" font-size="11" fill="#fff">O</text><rect x="11" y="15.500" width="15" height="10.500" fill="#e9b77a"/><path d="M11 15.500l7.500 6 7.500-6" fill="none" stroke="#fff" stroke-width="1.100"/></svg>
<span class="abs" style="left:246px;top:0;width:44px;height:40px;background:#454545"></span><span class="abs" style="left:290px;top:0;width:4px;height:40px;background:#2c2c2c"></span>
<svg class="abs" style="left:258px;top:8px" width="25" height="25" viewBox="0 0 25 25"><defs><linearGradient id="eg1" x1="0" y1="0" x2="1" y2="0"><stop offset="0" stop-color="#1f8fd8"/><stop offset=".6" stop-color="#3cc6a8"/><stop offset="1" stop-color="#6fd84a"/></linearGradient></defs><circle cx="12.500" cy="12.500" r="12" fill="#1565b8"/><path d="M.6 11.500A12 12 0 0 1 24.400 10.500c.2 3.500-2.500 5.500-6 5.500-2 0-3-.8-2.600-2 .6-1.600.2-4-3.300-4.500C7 9 2 10 .6 11.500z" fill="url(#eg1)"/><path d="M6 14c0 5 4 9 9.500 9.500A12 12 0 0 1 .6 12.500C2 10.500 5 10 8 10.500 6.500 11.500 6 12.500 6 14z" fill="#0f4f9e"/><path d="M9 13c0 4 3 7.500 8 7.500 2 0 4-.6 5.500-1.800C20 23 15 25 10 22.500 6.500 20.500 6 16 9 13z" fill="#2a86d8"/></svg>
<span class="abs" style="left:246px;top:38px;width:44px;height:2px;background:#76b9ed"></span><span class="abs" style="left:290px;top:38px;width:0px;height:2px;background:#5b8db5"></span>
<svg class="abs" style="left:307px;top:8px" width="24" height="24" viewBox="0 0 24 24"><rect x="11" y="3" width="12.500" height="18" fill="#fff" stroke="#2b579a" stroke-width="1"/><path d="M14.500 6.500h7M14.500 9h7M14.500 11.500h7M14.500 14h7M14.500 16.500h7" stroke="#2b579a" stroke-width="1.200"/><path d="M0 2.500L14 0v24L0 21.500z" fill="#2b579a"/><text x="7" y="16.200" text-anchor="middle" font-family="Liberation Sans,sans-serif" font-weight="bold" font-size="10.500" fill="#fff">W</text></svg>
<span class="abs" style="left:299px;top:38px;width:31px;height:2px;background:#76b9ed"></span><span class="abs" style="left:330px;top:38px;width:9px;height:2px;background:#5b8db5"></span>
<svg class="abs" style="left:356px;top:8px" width="24" height="24" viewBox="0 0 24 24"><rect x="11" y="3" width="12.500" height="18" fill="#fff" stroke="#1e7145" stroke-width="1"/><path d="M14.500 6.500h7M14.500 9.500h7M14.500 12.500h7M14.500 15.500h7M14.500 18h7M18 5v15" stroke="#1e7145" stroke-width="1.100"/><path d="M0 2.500L14 0v24L0 21.500z" fill="#1e7145"/><text x="7" y="16.200" text-anchor="middle" font-family="Liberation Sans,sans-serif" font-weight="bold" font-size="11" fill="#fff">X</text></svg>
<span class="abs" style="left:348px;top:38px;width:31px;height:2px;background:#76b9ed"></span><span class="abs" style="left:379px;top:38px;width:9px;height:2px;background:#5b8db5"></span>
<svg class="abs" style="left:404px;top:7px" width="26" height="26" viewBox="0 0 26 26"><path d="M11 7.500c6-1.500 11 1 11 6 0 5-6 9.500-13 8.500-5-.8-8-3.500-8-7 0-2 2.500-1.500 3.500-3 1.200-2 2-3.700 6.500-4.500z" fill="#b9cfe6" stroke="#5f86b0" stroke-width=".8"/><circle cx="8" cy="13" r="1.800" fill="#d9362a"/><circle cx="12.500" cy="10.500" r="1.800" fill="#5cb338"/><circle cx="17" cy="10.500" r="1.800" fill="#f0a020"/><circle cx="10" cy="18" r="2" fill="#fff"/><path d="M12 24.500L20.500 6l1.800.8L14 25z" fill="#e9963a"/><path d="M20.500 6l2-5 1.500.6-1.700 5.200z" fill="#c8a878"/></svg>
<span class="abs" style="left:397px;top:38px;width:31px;height:2px;background:#76b9ed"></span><span class="abs" style="left:428px;top:38px;width:9px;height:2px;background:#5b8db5"></span>
<svg class="abs" style="left:455px;top:8px" width="22" height="21" viewBox="0 0 22 21"><rect x=".7" y=".7" width="20.600" height="19.600" fill="#2a0907" stroke="#e2231a" stroke-width="1.400"/><path d="M4.500 16c1-2.500 5.500-4.500 13-4.800 1.500.2 1.300 1.500-.2 1.300C13 11.500 10 7 10.500 4.300c.3-1 1.400-.8 1.300.6C11.500 9 8.500 14.500 5.500 16.800c-.8.500-1.400 0-1-.8z" fill="none" stroke="#fff" stroke-width=".9"/></svg>
<span class="abs" style="left:446px;top:38px;width:31px;height:2px;background:#76b9ed"></span><span class="abs" style="left:477px;top:38px;width:9px;height:2px;background:#5b8db5"></span>
<svg class="abs" style="left:502px;top:7px" width="26" height="26" viewBox="0 0 26 26"><circle cx="13" cy="13" r="12.500" fill="#fff"/><circle cx="13" cy="13" r="11.300" fill="#6a62e0"/><circle cx="13" cy="12" r="8.500" fill="#cdc9f6"/><path d="M4.500 12a8.500 8.500 0 0 0 17 0z" fill="#fff"/><circle cx="13" cy="10.500" r="5.500" fill="#6a62e0"/><path d="M8 11.500a5 5 0 0 0 10 0z" fill="#fff"/></svg>
<span class="abs" style="left:495px;top:38px;width:40px;height:2px;background:#76b9ed"></span><span class="abs" style="left:535px;top:38px;width:0px;height:2px;background:#5b8db5"></span>
<svg class="abs" style="left:1427px;top:16px" width="13" height="8" viewBox="0 0 13 8"><path d="M.6 7.200L6.500 1.200l5.900 6" fill="none" stroke="#fff" stroke-width="1.200"/></svg>
<svg class="abs" style="left:1448px;top:13px" width="18" height="13" viewBox="0 0 18 13"><path d="M2 2v2M5 2v2M.8 4.200h5.400v2.300a2.700 2.700 0 0 1-2 2.600V11.500H11" fill="none" stroke="#fff" stroke-width="1"/><rect x="5.500" y="3.800" width="10.500" height="6.400" fill="#fff"/><rect x="16.300" y="5.500" width="1.200" height="3" fill="#fff"/></svg>
<svg class="abs" style="left:1472px;top:13px" width="16" height="13" viewBox="0 0 16 13"><path d="M1 4.300h2.500L7 .8v11.400L3.500 8.700H1z" fill="none" stroke="#fff" stroke-width="1.100" stroke-linejoin="round"/><path d="M9.800 4.200l4.600 4.600M14.400 4.200L9.800 8.800" stroke="#fff" stroke-width="1.100"/></svg>
<div class="abs ttx" style="left:1500.500px;top:13px;font-size:11.500px;letter-spacing:-.6px">CES</div>
<div class="abs ttx" style="left:1530px;top:4px;width:62px;text-align:center;letter-spacing:-.6px">10:13</div>
<div class="abs ttx" style="left:1530px;top:22px;width:62px;text-align:center;letter-spacing:-.6px">27.10.2021</div>
<span class="abs" style="left:1595px;top:0;width:1px;height:40px;background:#8a8a8a"></span>
</div>

</div>
</body>
</html>
